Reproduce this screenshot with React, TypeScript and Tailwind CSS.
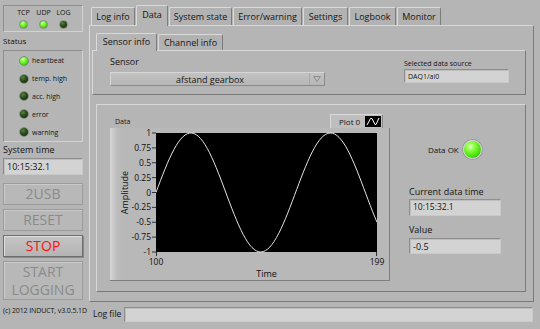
import React from "react";

type LedSize = "xs" | "sm" | "lg";

function Led({ on, size = "sm" }: { on: boolean; size?: LedSize }) {
  const dim =
    size === "lg" ? "w-[19px] h-[19px]" : size === "sm" ? "w-[10px] h-[10px]" : "w-[9px] h-[9px]";
  const fill = on
    ? "bg-[radial-gradient(circle_at_38%_32%,#e4ffc4_0%,#86ff3c_28%,#49dc10_65%,#2c9608_100%)]"
    : "bg-[radial-gradient(circle_at_38%_32%,#58803f_0%,#284a1c_45%,#112509_100%)]";
  const ring = size === "lg" ? "border border-[#d8d8d8] shadow-[0_0_0_1px_#9a9a9a]" : "border border-[#7f8f7a]";
  return <span className={`${dim} ${fill} ${ring} rounded-full shrink-0 block`} />;
}

function Field({ value, className, text = "text-[9px]" }: { value?: string; className: string; text?: string }) {
  return (
    <div
      className={`${className} ${text} bg-[#d3d3d3] border border-t-[#8e8e8e] border-l-[#8e8e8e] border-r-[#c9c9c9] border-b-[#c9c9c9] shadow-[inset_1px_1px_0_#bdbdbd] flex items-center pl-[3px] leading-none text-[#141414]`}
    >
      {value}
    </div>
  );
}

function SideButton({ children, tall, stop }: { children: React.ReactNode; tall?: boolean; stop?: boolean }) {
  return (
    <div
      className={`w-[80px] ${tall ? "h-[39px] flex-col" : "h-[22px]"} flex items-center justify-center text-[14px] leading-[18px] ${
        stop
          ? "text-[#ff1010] bg-[linear-gradient(#c4c4c4,#b4b4b4)] border border-[#6e6e6e] shadow-[inset_1px_1px_0_#dedede,1px_1px_0_#8a8a8a]"
          : "text-[#8a8a8a] bg-[#b8b8b8] border border-[#9c9c9c] shadow-[inset_1px_1px_0_#cacaca]"
      }`}
    >
      {children}
    </div>
  );
}

const statusRows: { label: string; on: boolean }[] = [
  { label: "heartbeat", on: true },
  { label: "temp. high", on: false },
  { label: "acc. high", on: false },
  { label: "error", on: false },
  { label: "warning", on: false },
];

const tabs: { label: string; w: string; active?: boolean }[] = [
  { label: "Log info", w: "w-[44px]" },
  { label: "Data", w: "w-[32px]", active: true },
  { label: "System state", w: "w-[63px]" },
  { label: "Error/warning", w: "w-[69px]" },
  { label: "Settings", w: "w-[45px]" },
  { label: "Logbook", w: "w-[47px]" },
  { label: "Monitor", w: "w-[44px]" },
];

const yTicks = ["1", "0.75", "0.5", "0.25", "0", "-0.25", "-0.5", "-0.75", "-1"];

function Chart() {
  const x0 = 46;
  const y0 = 5;
  const w = 221;
  const h = 119;
  const pts = Array.from({ length: 100 }, (_, i) => {
    const t = i / 99;
    const x = x0 + t * w;
    const y = y0 + h / 2 - Math.sin((t * 19 * Math.PI) / 6) * (h / 2);
    return `${x.toFixed(2)},${y.toFixed(2)}`;
  });

  return (
    <svg width="280" height="152" className="block overflow-visible font-['Open_Sans',sans-serif]">
      <rect x={x0} y={y0} width={w} height={h} fill="#000" />
      <polyline points={pts.join(" ")} fill="none" stroke="#e4e4e4" strokeWidth="1" />
      {yTicks.map((t, i) => {
        const y = y0 + i * (h / 8);
        return (
          <g key={t}>
            <line x1={42} x2={46} y1={y} y2={y} stroke="#333" strokeWidth="1" />
            <text x={41} y={y + 3} fontSize="8.5" textAnchor="end" fill="#111">
              {t}
            </text>
          </g>
        );
      })}
      <line x1={x0 + 0.5} x2={x0 + 0.5} y1={y0 + h} y2={y0 + h + 4} stroke="#333" />
      <line x1={x0 + w - 0.5} x2={x0 + w - 0.5} y1={y0 + h} y2={y0 + h + 4} stroke="#333" />
      <text x={x0} y={137} fontSize="8.5" textAnchor="middle" fill="#111">
        100
      </text>
      <text x={x0 + w} y={137} fontSize="8.5" textAnchor="middle" fill="#111">
        199
      </text>
      <text x={x0 + w / 2} y={149} fontSize="9" textAnchor="middle" fill="#111">
        Time
      </text>
      <text x={18} y={64.5} fontSize="9" textAnchor="middle" fill="#111" transform="rotate(-90 18 64.5)">
        Amplitude
      </text>
    </svg>
  );
}

export default function App() {
  return (
    <div className="w-[540px] h-[329px] bg-[#b5b5b5] flex overflow-hidden font-['Open_Sans',sans-serif] text-[#141414]">
      {/* left column */}
      <div className="w-[86px] shrink-0 flex flex-col pl-[3px]">
        <div className="mt-[5px] w-[80px] h-[27px] border border-t-[#8e8e8e] border-l-[#8e8e8e] border-r-[#d2d2d2] border-b-[#d2d2d2] flex pl-[10px] gap-[1px]">
          {[
            { l: "TCP", on: true },
            { l: "UDP", on: true },
            { l: "LOG", on: false },
          ].map((c) => (
            <div key={c.l} className="w-[19px] flex flex-col items-center">
              <span className="mt-[3px] text-[7px] leading-none">{c.l}</span>
              <span className="mt-[4px]">
                <Led on={c.on} size="xs" />
              </span>
            </div>
          ))}
        </div>
        <div className="mt-[5px] text-[8px] leading-none h-[10px]">Status</div>
        <div className="mt-[3px] w-[80px] h-[92px] border border-t-[#8e8e8e] border-l-[#8e8e8e] border-r-[#d2d2d2] border-b-[#d2d2d2] flex flex-col pt-[1px] pl-[15px]">
          {statusRows.map((r) => (
            <div key={r.label} className="h-[18px] flex items-center gap-[3px]">
              <Led on={r.on} />
              <span className="text-[7px] leading-none">{r.label}</span>
            </div>
          ))}
        </div>
        <div className="mt-[2px] text-[9px] leading-[12px] h-[12px]">System time</div>
        <Field value="10:15:32.1" className="mt-[2px] w-[80px] h-[17px]" />
        <div className="mt-[8px] flex flex-col gap-[4px]">
          <SideButton>2USB</SideButton>
          <SideButton>RESET</SideButton>
          <SideButton stop>STOP</SideButton>
          <SideButton tall>
            <span className="h-[18px]">START</span>
            <span className="h-[18px]">LOGGING</span>
          </SideButton>
        </div>
        <div className="mt-[7px] text-[7px] leading-none whitespace-nowrap tracking-[-0.1px]">(c) 2012 INDUCT, v3.0.5.1D</div>
      </div>

      {/* main column */}
      <div className="flex-1 flex flex-col pt-[5px]">
        <div className="ml-[3px] w-[445px] flex flex-col">
          <div className="h-[20px] flex items-end pl-[2px] gap-[1px]">
            {tabs.map((t) => (
              <div
                key={t.label}
                className={`${t.w} ${
                  t.active
                    ? "h-[21px] -mb-px relative z-10 bg-[#b5b5b5] pb-[3px]"
                    : "h-[18px] bg-[#b2b2b2]"
                } flex items-center justify-center text-[9px] leading-none border-t border-l border-r border-t-[#dadada] border-l-[#dadada] border-r-[#7c7c7c] rounded-t-[2px]`}
              >
                {t.label}
              </div>
            ))}
          </div>
          <div className="h-[277px] border border-t-[#d8d8d8] border-l-[#d8d8d8] border-r-[#7a7a7a] border-b-[#7a7a7a] flex flex-col pl-[2px] pt-[7px]">
            {/* inner tabs */}
            <div className="h-[17px] flex items-end pl-[4px] gap-[1px]">
              <div className="w-[61px] h-[18px] -mb-px relative z-10 bg-[#b5b5b5] pb-[2px] flex items-center justify-center text-[9px] leading-none border-t border-l border-r border-t-[#dadada] border-l-[#dadada] border-r-[#7c7c7c] rounded-t-[2px]">
                Sensor info
              </div>
              <div className="w-[65px] h-[16px] bg-[#b2b2b2] flex items-center justify-center text-[9px] leading-none border-t border-l border-r border-t-[#dadada] border-l-[#dadada] border-r-[#7c7c7c] rounded-t-[2px]">
                Channel info
              </div>
            </div>
            <div className="w-[434px] h-[45px] border border-t-[#d8d8d8] border-l-[#d8d8d8] border-r-[#7a7a7a] border-b-[#7a7a7a] flex">
              <div className="ml-[17px] flex flex-col">
                <span className="mt-[6px] text-[9px] leading-[10px] h-[10px]">Sensor</span>
                <div className="mt-[5px] w-[215px] h-[14px] flex border border-t-[#d6d6d6] border-l-[#d6d6d6] border-r-[#8a8a8a] border-b-[#8a8a8a] bg-[linear-gradient(#c2c2c2,#b6b6b6)]">
                  <span className="flex-1 flex items-center justify-center text-[9px] leading-none">afstand gearbox</span>
                  <span className="w-[15px] flex items-center justify-center border-l border-l-[#a8a8a8]">
                    <svg width="8" height="6" viewBox="0 0 8 6">
                      <path d="M0.5 0.5 L7.5 0.5 L4 5.5 Z" fill="none" stroke="#8c8c8c" strokeWidth="1" />
                    </svg>
                  </span>
                </div>
              </div>
              <div className="ml-[79px] flex flex-col">
                <span className="mt-[9px] text-[7px] leading-[8px] h-[8px]">Selected data source</span>
                <Field value="DAQ1/ai0" text="text-[7px]" className="mt-[1px] w-[105px] h-[14px]" />
              </div>
            </div>

            {/* chart panel */}
            <div className="mt-[9px] ml-[4px] w-[430px] h-[188px] border border-t-[#d8d8d8] border-l-[#d8d8d8] border-r-[#7a7a7a] border-b-[#7a7a7a] flex pl-[13px] pt-[9px]">
              <div className="w-[280px] flex flex-col">
                <div className="h-[14px] flex items-end justify-between">
                  <span className="ml-[5px] mb-[3px] text-[7px] leading-none">Data</span>
                  <div className="mr-[7px] w-[53px] h-[14px] flex items-center justify-between pl-[8px] pr-[1px] bg-[#bebebe] border border-t-[#dadada] border-l-[#dadada] border-r-[#8a8a8a] border-b-0">
                    <span className="text-[8px] leading-none">Plot 0</span>
                    <span className="w-[16px] h-[11px] bg-black flex items-center justify-center">
                      <svg width="14" height="9" viewBox="0 0 14 9">
                        <path d="M1 8 L4.5 1.5 L6 1.5 L9 7.5 L10 7.5 L13 1" fill="none" stroke="#fff" strokeWidth="1" />
                      </svg>
                    </span>
                  </div>
                </div>
                <div className="h-[153px] bg-[linear-gradient(to_right,#d6d6d6,#bdbdbd_7px,#b8b8b8_12px)] border-r border-b border-r-[#7e7e7e] border-b-[#7e7e7e]">
                  <Chart />
                </div>
              </div>
              <div className="ml-[19px] w-[92px] flex flex-col">
                <div className="mt-[26px] h-[19px] flex items-center pl-[19px] gap-[4px]">
                  <span className="text-[8px] leading-none">Data OK</span>
                  <Led on size="lg" />
                </div>
                <span className="mt-[27px] text-[9px] leading-[12px] h-[12px] whitespace-nowrap">Current data time</span>
                <Field value="10:15:32.1" text="text-[8.5px]" className="mt-[1px] w-[92px] h-[17px]" />
                <span className="mt-[8px] text-[9px] leading-[12px] h-[12px]">Value</span>
                <Field value="-0.5" className="mt-[2px] w-[92px] h-[16px]" />
              </div>
            </div>
          </div>
        </div>

        {/* log file row */}
        <div className="mt-[5px] flex items-center pl-[7px] gap-[3px]">
          <span className="text-[8.5px] leading-none w-[28px] whitespace-nowrap">Log file</span>
          <Field className="w-[409px] h-[15px]" />
        </div>
      </div>
    </div>
  );
}
